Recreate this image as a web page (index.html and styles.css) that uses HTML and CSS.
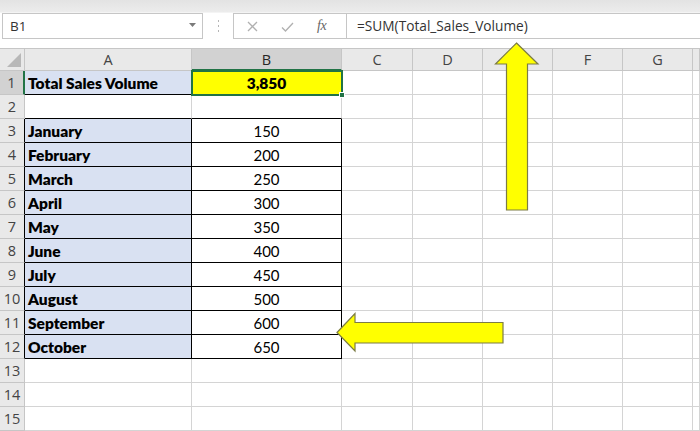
FILE: index.html
```html
<!DOCTYPE html>
<html>
<head>
<meta charset="utf-8">
<link rel="stylesheet" href="styles.css">
</head>
<body>
<div class="app">
  <div class="strip"></div>
  <div class="fbar">
    <div class="namebox">
      <span class="nb-text">B1</span>
      <svg class="caret" width="7" height="4" viewBox="0 0 7 4"><path d="M0 0H7L3.5 4Z" fill="#7a7a7a"/></svg>
    </div>
    <div class="grip">
      <svg width="3" height="12" viewBox="0 0 3 12"><rect x="1" y="0" width="1" height="2" fill="#b5b5b5"/><rect x="1" y="5" width="1" height="2" fill="#b5b5b5"/><rect x="1" y="10" width="1" height="2" fill="#b5b5b5"/></svg>
    </div>
    <div class="fxbox">
      <svg class="ic-x" width="11" height="11" viewBox="0 0 11 11"><path d="M1 1L10 10M10 1L1 10" stroke="#b0b0b0" stroke-width="1.3" fill="none"/></svg>
      <svg class="ic-ok" width="13" height="10" viewBox="0 0 13 10"><path d="M1 5.5L4.5 9L12 1" stroke="#b0b0b0" stroke-width="1.3" fill="none"/></svg>
      <span class="fx">fx</span>
    </div>
    <div class="formula">=SUM(Total_Sales_Volume)</div>
  </div>
  <div class="sheet">
    <div class="c hd corner"><svg width="14" height="14" viewBox="0 0 14 14"><path d="M14 0V14H0Z" fill="#b8b8b8"/></svg></div>
    <div class="c hd">A</div>
    <div class="c hd sel">B</div>
    <div class="c hd">C</div>
    <div class="c hd">D</div>
    <div class="c hd">E</div>
    <div class="c hd">F</div>
    <div class="c hd">G</div>
    <div class="c hd"></div>

    <div class="c rh rsel">1</div>
    <div class="c lab bb">Total Sales Volume</div>
    <div class="c total bb br"><span>3,850</span><div class="selbox"><div class="handle"></div></div></div>
    <div class="c"></div><div class="c"></div><div class="c"></div><div class="c"></div><div class="c"></div><div class="c"></div>

    <div class="c rh">2</div>
    <div class="c bb"></div>
    <div class="c bb"></div>
    <div class="c"></div><div class="c"></div><div class="c"></div><div class="c"></div><div class="c"></div><div class="c"></div>

    <div class="c rh br">3</div>
    <div class="c lab bb br">January</div>
    <div class="c num bb br">150</div>
    <div class="c"></div><div class="c"></div><div class="c"></div><div class="c"></div><div class="c"></div><div class="c"></div>

    <div class="c rh br">4</div>
    <div class="c lab bb br">February</div>
    <div class="c num bb br">200</div>
    <div class="c"></div><div class="c"></div><div class="c"></div><div class="c"></div><div class="c"></div><div class="c"></div>

    <div class="c rh br">5</div>
    <div class="c lab bb br">March</div>
    <div class="c num bb br">250</div>
    <div class="c"></div><div class="c"></div><div class="c"></div><div class="c"></div><div class="c"></div><div class="c"></div>

    <div class="c rh br">6</div>
    <div class="c lab bb br">April</div>
    <div class="c num bb br">300</div>
    <div class="c"></div><div class="c"></div><div class="c"></div><div class="c"></div><div class="c"></div><div class="c"></div>

    <div class="c rh br">7</div>
    <div class="c lab bb br">May</div>
    <div class="c num bb br">350</div>
    <div class="c"></div><div class="c"></div><div class="c"></div><div class="c"></div><div class="c"></div><div class="c"></div>

    <div class="c rh br">8</div>
    <div class="c lab bb br">June</div>
    <div class="c num bb br">400</div>
    <div class="c"></div><div class="c"></div><div class="c"></div><div class="c"></div><div class="c"></div><div class="c"></div>

    <div class="c rh br">9</div>
    <div class="c lab bb br">July</div>
    <div class="c num bb br">450</div>
    <div class="c"></div><div class="c"></div><div class="c"></div><div class="c"></div><div class="c"></div><div class="c"></div>

    <div class="c rh br">10</div>
    <div class="c lab bb br">August</div>
    <div class="c num bb br">500</div>
    <div class="c"></div><div class="c"></div><div class="c"></div><div class="c"></div><div class="c"></div><div class="c"></div>

    <div class="c rh br">11</div>
    <div class="c lab bb br">September</div>
    <div class="c num bb br">600</div>
    <div class="c"></div><div class="c"></div><div class="c"></div><div class="c"></div><div class="c"></div><div class="c"></div>

    <div class="c rh br">12</div>
    <div class="c lab bb br">October</div>
    <div class="c num bb br">650</div>
    <div class="c"></div><div class="c"></div><div class="c"></div><div class="c"></div><div class="c"></div><div class="c"></div>

    <div class="c rh">13</div>
    <div class="c"></div><div class="c"></div><div class="c"></div><div class="c"></div><div class="c"></div><div class="c"></div><div class="c"></div><div class="c"></div>

    <div class="c rh">14</div>
    <div class="c"></div><div class="c"></div><div class="c"></div><div class="c"></div><div class="c"></div><div class="c"></div><div class="c"></div><div class="c"></div>

    <div class="c rh">15</div>
    <div class="c"></div><div class="c"></div><div class="c"></div><div class="c"></div><div class="c"></div><div class="c"></div><div class="c"></div><div class="c"></div>
  </div>

  <svg class="arrows" width="700" height="431" viewBox="0 0 700 431">
    <polygon points="516.5,43 538,64 527.5,64 527.5,210 506.5,210 506.5,64 495.5,64" fill="#ffff00" stroke="#7c7c45" stroke-width="1.2" stroke-linejoin="miter"/>
    <polygon points="337,332.5 355,313.5 355,322.5 503,322.5 503,343 355,343 355,351" fill="#ffff00" stroke="#7c7c45" stroke-width="1.2"/>
  </svg>
</div>
</body>
</html>
```

FILE: styles.css
```css
* { box-sizing: border-box; }
html, body { margin: 0; padding: 0; }
body {
  width: 700px;
  height: 431px;
  overflow: hidden;
  background: #ffffff;
  font-family: Lato, "Open Sans", sans-serif;
}
.app {
  position: relative;
  width: 700px;
  height: 431px;
  overflow: hidden;
}
.strip {
  height: 13px;
  background: linear-gradient(#e3e3e3, #ececec);
  border-bottom: 1px solid #f4f4f4;
}
.fbar {
  height: 35px;
  background: #ffffff;
  display: flex;
  align-items: flex-start;
}
.namebox {
  margin-left: 2px;
  width: 201px;
  height: 26px;
  border: 1px solid #c6c6c6;
  background: #fff;
  display: flex;
  align-items: center;
  justify-content: space-between;
  padding: 0 6px 0 7px;
  font-family: "Open Sans", sans-serif;
  font-size: 13.5px;
  color: #333;
}
.caret { margin-top: -2px; }
.grip {
  width: 30px;
  height: 26px;
  display: flex;
  align-items: center;
  justify-content: center;
}
.fxbox {
  width: 113px;
  height: 26px;
  border: 1px solid #c6c6c6;
  border-right: none;
  background: #fff;
  display: flex;
  align-items: center;
  padding-left: 13px;
}
.ic-x { margin-right: 23px; }
.ic-ok { margin-right: 23px; margin-top: 2px; }
.fx {
  font-family: "Liberation Serif", serif;
  font-style: italic;
  font-size: 14px;
  color: #666;
  letter-spacing: -0.5px;
}
.formula {
  flex: 1;
  height: 26px;
  border: 1px solid #c6c6c6;
  border-right: none;
  background: #fff;
  padding-left: 10px;
  font-family: "Open Sans", sans-serif;
  font-size: 13.7px;
  line-height: 24px;
  color: #333;
}
.sheet {
  display: grid;
  grid-template-columns: 25px 167px 150px 71px 70px 70px 70px 70px 7px;
  grid-template-rows: 22px repeat(15, 24px);
  border-top: 1px solid #c6c6c6;
}
.c {
  border-right: 1px solid #d4d4d4;
  border-bottom: 1px solid #d4d4d4;
  font-size: 15px;
  color: #000;
  display: flex;
  align-items: center;
  white-space: nowrap;
  overflow: visible;
}
.hd {
  background: #e9e9e9;
  border-right-color: #c6c6c6;
  border-bottom-color: #c6c6c6;
  justify-content: center;
  font-family: "Open Sans", sans-serif;
  font-size: 14.5px;
  color: #444;
}
.corner {
  justify-content: flex-end;
  align-items: flex-end;
  padding: 0 3px 3px 0;
}
.hd.sel {
  background: #d2d2d2;
  color: #262626;
  border-bottom: 2px solid #217346;
}
.rh {
  background: #e9e9e9;
  border-right-color: #c6c6c6;
  border-bottom-color: #c6c6c6;
  justify-content: center;
  font-family: "Open Sans", sans-serif;
  font-size: 14.5px;
  color: #444;
}
.rh.rsel {
  background: #d2d2d2;
  border-right: 2px solid #217346;
}
.lab {
  background: #d9e1f2;
  font-weight: 800;
  font-size: 15.5px;
  padding-left: 3px;
}
.num {
  justify-content: center;
}
.total {
  background: #ffff00;
  justify-content: center;
  font-weight: 800;
  font-size: 15.5px;
  position: relative;
}
.bb { border-bottom-color: #000; }
.br { border-right-color: #000; }
.selbox {
  position: absolute;
  left: -1px;
  top: -1px;
  right: -2px;
  bottom: -2px;
  border: 2px solid #217346;
}
.handle {
  position: absolute;
  right: -4px;
  bottom: -4px;
  width: 6px;
  height: 6px;
  background: #217346;
  border: 1px solid #fff;
}
.arrows {
  position: absolute;
  left: 0;
  top: 0;
  pointer-events: none;
}
```
